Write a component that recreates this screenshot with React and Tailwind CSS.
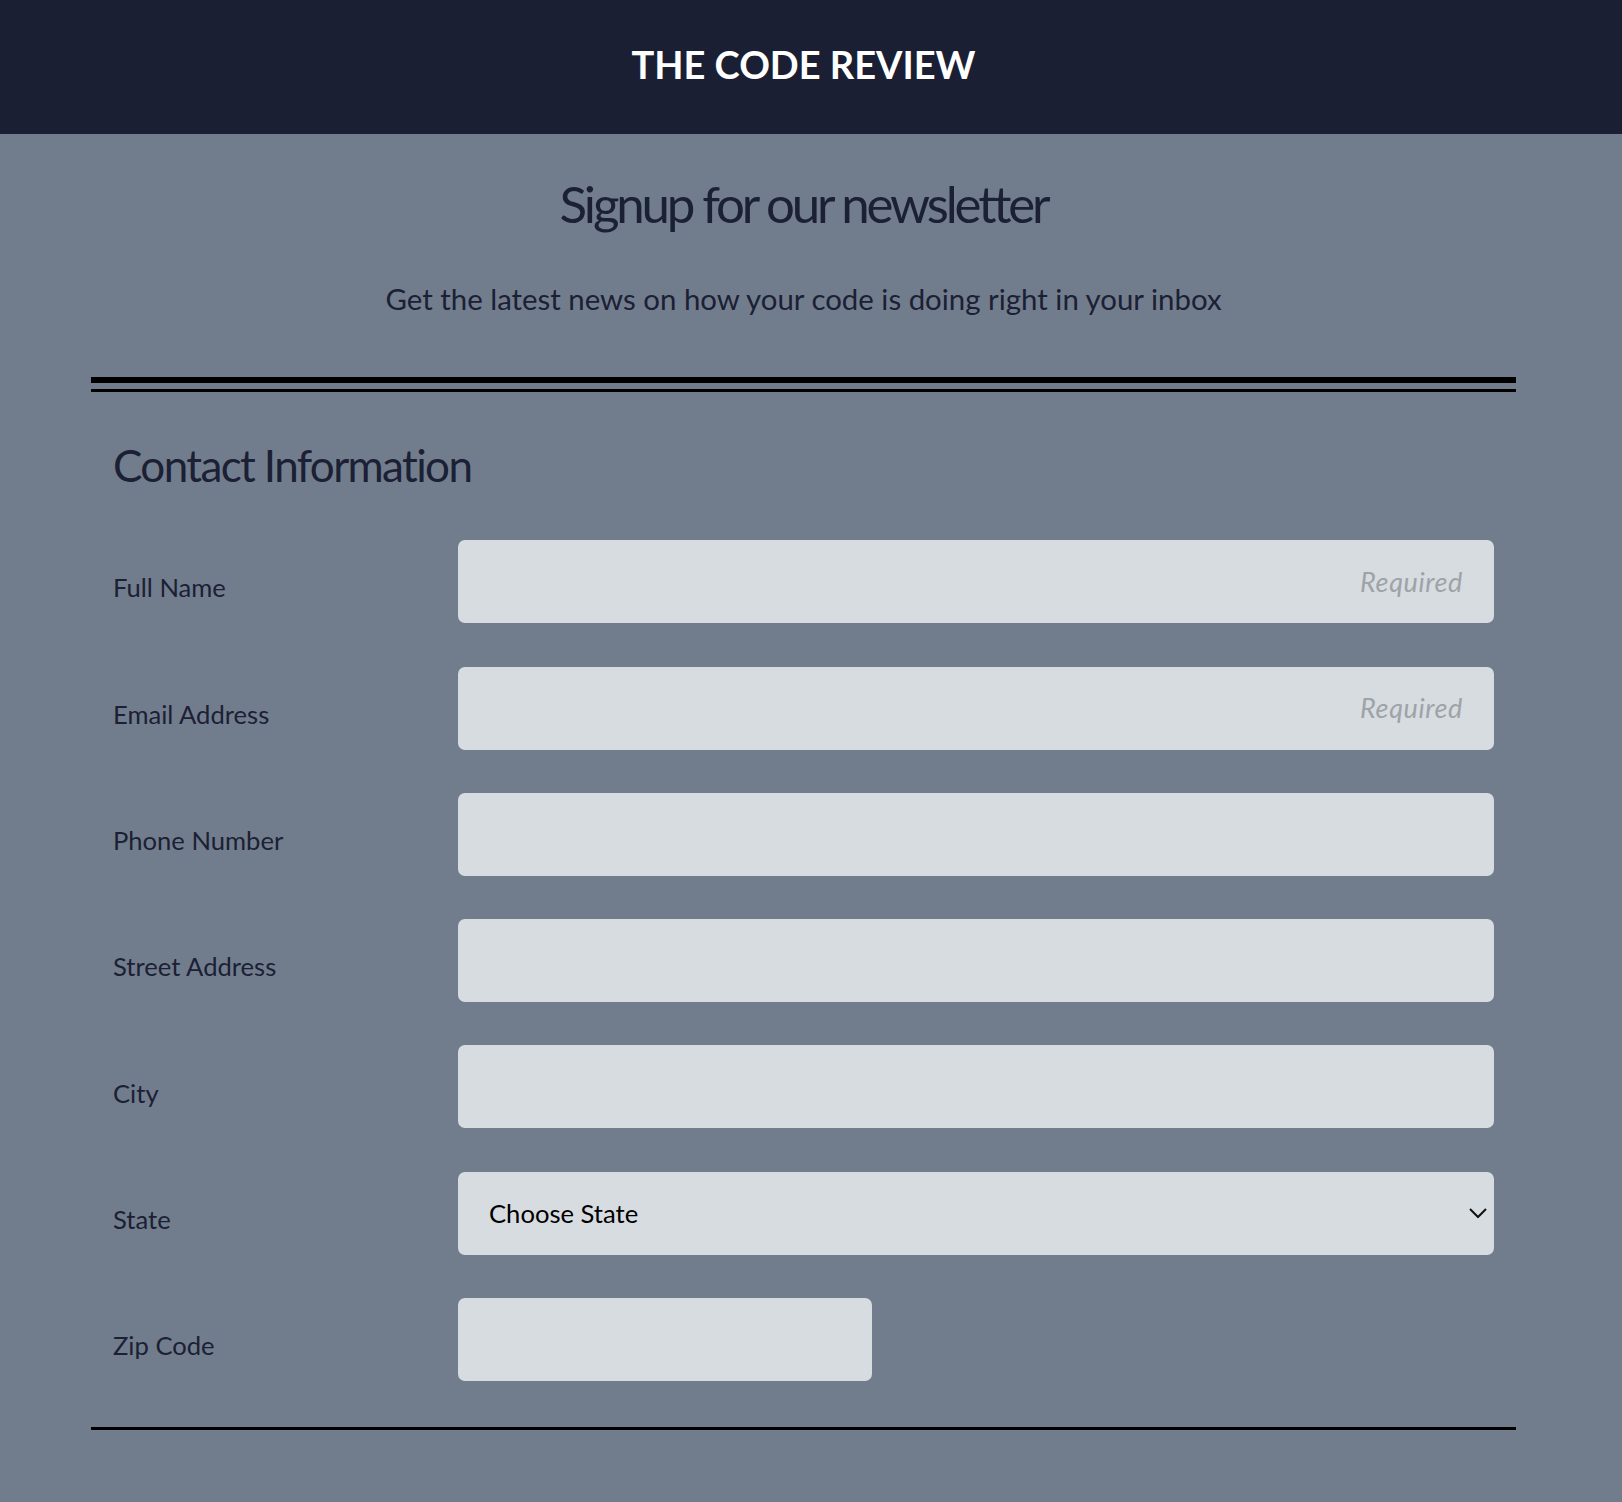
import { useState } from 'react';

const fields = [
  { label: 'Full Name', type: 'text', required: true },
  { label: 'Email Address', type: 'email', required: true },
  { label: 'Phone Number', type: 'tel' },
  { label: 'Street Address', type: 'text' },
  { label: 'City', type: 'text' },
];

function Chevron() {
  return (
    <svg
      className="pointer-events-none absolute right-[7px] top-1/2 -translate-y-1/2"
      width="18"
      height="11"
      viewBox="0 0 18 11"
      fill="none"
      stroke="#111"
      strokeWidth="2"
    >
      <path d="M1 1.5l8 8 8-8" />
    </svg>
  );
}

export default function App() {
  const [state, setState] = useState('');

  return (
    <div className="min-h-screen bg-[#717d8d] font-['Lato','Liberation_Sans',sans-serif] text-[#1c2034]">
      <header className="flex h-[134px] items-center justify-center bg-[#1b1f33] pb-[4px] pr-[15px]">
        <h1 className="text-[38px] font-bold leading-[1.2] text-white">THE CODE REVIEW</h1>
      </header>

      <main className="pr-[15px]">
        <div className="mx-auto w-[1425px]">
          <h2 className="mt-[39px] text-center text-[51px] leading-[1.2] tracking-[-0.062em]">
            Signup for our newsletter
          </h2>
          <p className="mt-[47px] text-center text-[29.4px] leading-[1.2]">
            Get the latest news on how your code is doing right in your inbox
          </p>

          <div className="mt-[61px]">
            <div className="h-[6px] bg-black" />
            <div className="mt-[6px] h-[3px] bg-black" />
          </div>

          <form className="px-[22px]">
            <h3 className="mt-[47px] text-[44px] leading-[1.2] tracking-[-0.037em]">Contact Information</h3>

            <div className="mt-[48px] grid grid-cols-[345px_1fr] gap-y-[43.3px]">
              {fields.map((f) => (
                <div key={f.label} className="contents">
                  <label className="self-center pt-[12px] text-[25.6px] leading-[1.2]">{f.label}</label>
                  <input
                    type={f.type}
                    placeholder={f.required ? 'Required' : ''}
                    className="h-[83px] w-full rounded-[7px] bg-[#d7dce0] px-[31px] text-right text-[25.6px] italic outline-none placeholder:text-[27px] placeholder:tracking-[0.6px] placeholder:text-[#9ea3a8]"
                  />
                </div>
              ))}

              <label className="self-center pt-[12px] text-[25.6px] leading-[1.2]">State</label>
              <div className="relative">
                <select
                  value={state}
                  onChange={(e) => setState(e.target.value)}
                  className="h-[83px] w-full appearance-none rounded-[7px] bg-[#d7dce0] px-[31px] text-[25.6px] text-black outline-none"
                >
                  <option value="">Choose State</option>
                  <option value="CA">California</option>
                  <option value="NY">New York</option>
                  <option value="TX">Texas</option>
                </select>
                <Chevron />
              </div>

              <label className="self-center pt-[12px] text-[25.6px] leading-[1.2]">Zip Code</label>
              <input
                type="text"
                className="h-[83px] w-[414px] rounded-[7px] bg-[#d7dce0] px-[31px] text-[25.6px] outline-none"
              />
            </div>
          </form>

          <div className="mt-[46px] h-[3px] bg-black" />
        </div>
      </main>
    </div>
  );
}
